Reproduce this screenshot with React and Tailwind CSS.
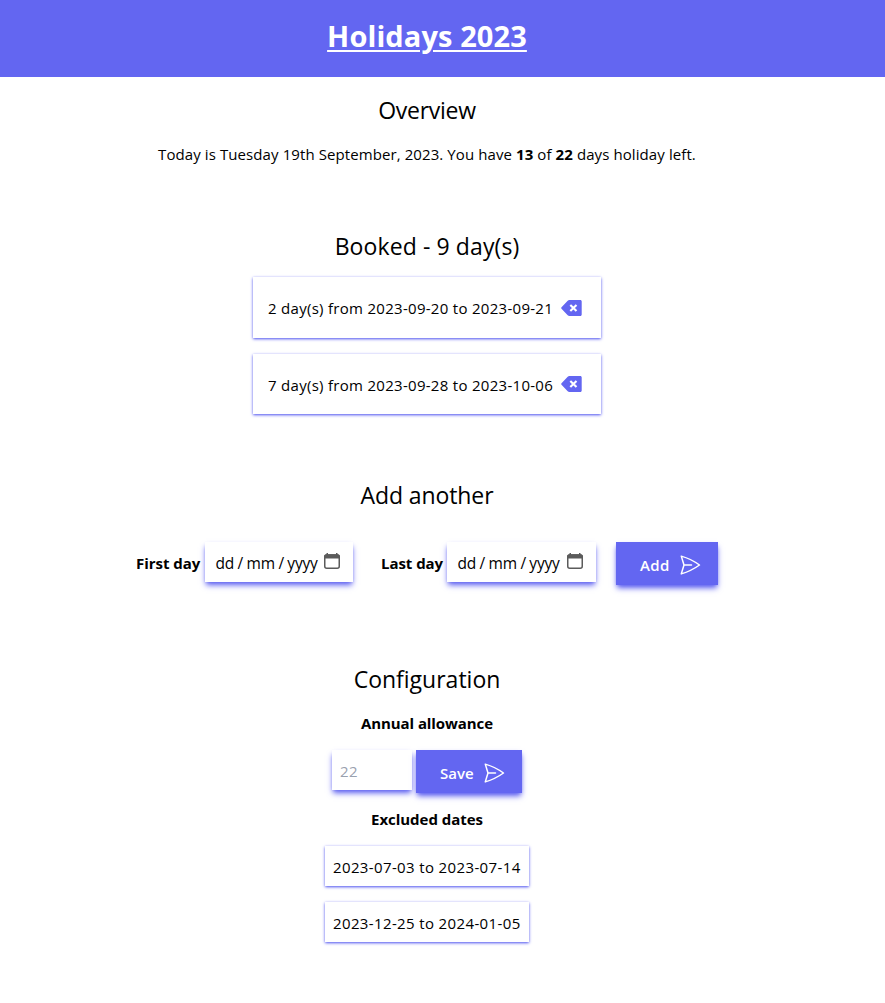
const BOOKED = [
  { text: '2 day(s) from 2023-09-20 to 2023-09-21', size: 'h-[61px] mb-[15.5px]', textClass: 'pt-[1px]' },
  { text: '7 day(s) from 2023-09-28 to 2023-10-06', size: 'h-[60px]', textClass: 'pt-[3px]' },
];
const EXCLUDED = ['2023-07-03 to 2023-07-14', '2023-12-25 to 2024-01-05'];

function BackspaceIcon() {
  return (
    <svg className="ml-[7px] h-4 w-[21px] shrink-0" viewBox="0 0 21 16" fill="none">
      <path d="M6.7.7C7.2.2 7.7 0 8.3 0H19.2C20.2 0 20.7.6 20.7 1.5V14.5C20.7 15.4 20.2 16 19.2 16H8.3C7.7 16 7.2 15.8 6.7 15.3L.5 8.8C0 8.3 0 7.7.5 7.2Z" fill="#6366f1" />
      <path d="M9.3 4.9 15.5 11.1M15.5 4.9 9.3 11.1" stroke="white" strokeWidth="2.1" />
    </svg>
  );
}

function SendIcon() {
  return (
    <svg className="h-6 w-6 shrink-0" viewBox="0 0 24 24" fill="none" stroke="white" strokeWidth="1.5" strokeLinecap="round" strokeLinejoin="round">
      <path d="M6 12 3.269 3.126A59.768 59.768 0 0 1 21.485 12 59.77 59.77 0 0 1 3.27 20.876L5.999 12Zm0 0h7.5" />
    </svg>
  );
}

function CalendarIcon() {
  return (
    <svg className="mb-[2px] h-4 w-4 shrink-0" viewBox="0 0 16 16" fill="none">
      <rect x=".75" y="2" width="14.5" height="13.25" rx="2" stroke="#5b5b5b" strokeWidth="1.5" />
      <path d="M0 5.5V3.5C0 2.2.8 1.2 2.2 1.2H2.5V0H4V1.2H12V0H13.5V1.2H13.8C15.2 1.2 16 2.2 16 3.5V5.5Z" fill="#5b5b5b" />
    </svg>
  );
}

function DateField({ label, labelClass, boxClass }) {
  return (
    <div className="flex items-center">
      <span className={`pt-[3px] font-bold tracking-[-0.05px] whitespace-nowrap ${labelClass}`}>{label}</span>
      <div className={`flex h-10 items-center justify-between bg-white pr-[13px] pl-[10.5px] shadow-md shadow-[#6366f1] ${boxClass}`}>
        <span className="w-[104px] pt-[3px] text-[15.5px] tracking-[-0.2px] whitespace-nowrap">
          dd<span className="mx-[3.5px]">/</span>mm<span className="mx-[3.5px]">/</span>yyyy
        </span>
        <CalendarIcon />
      </div>
    </div>
  );
}

function ActionButton({ label, className }) {
  return (
    <button className={`flex h-[43px] items-center justify-between bg-[#6366f1] pt-[3px] pr-4 pl-6 font-semibold text-white shadow-md shadow-[#6366f1] ${className}`}>
      {label}
      <SendIcon />
    </button>
  );
}

export default function App() {
  return (
    <div className="h-[1003px] overflow-hidden bg-white font-['Open_Sans','Noto_Sans',sans-serif] text-[15px] leading-6 text-black">
      <header className="flex h-[77px] justify-center bg-[#6366f1] pt-[18px]">
        <h1 className="ml-[-31px] text-[29px] leading-9 font-bold tracking-[0.1px] text-white underline decoration-2 underline-offset-[3px]">Holidays 2023</h1>
      </header>
      <main className="flex w-[854px] flex-col items-center">
        <h2 className="mt-[17px] text-[23px] leading-8 tracking-[-0.28px]">Overview</h2>
        <p className="mt-4 tracking-[0.09px] whitespace-nowrap">
          Today is Tuesday 19th September, 2023. You have <b>13</b> of <b>22</b> days holiday left.
        </p>

        <h2 className="mt-16 text-[23px] leading-8 tracking-[0.1px]">Booked - 9 day(s)</h2>
        <ul className="mt-[15px]">
          {BOOKED.map((b) => (
            <li key={b.text} className={`flex w-[348px] items-center bg-white pl-[15px] shadow shadow-[#6366f1] ${b.size}`}>
              <span className={`w-[286px] tracking-[0.29px] whitespace-nowrap ${b.textClass}`}>{b.text}</span>
              <BackspaceIcon />
            </li>
          ))}
        </ul>

        <h2 className="mt-[65px] text-[23px] leading-8 tracking-[-0.1px]">Add another</h2>
        <div className="mt-[31px] flex items-start">
          <DateField label="First day" labelClass="w-[69px]" boxClass="w-[148px]" />
          <div className="w-7" />
          <DateField label="Last day" labelClass="w-[66px]" boxClass="w-[149px]" />
          <div className="w-5" />
          <ActionButton label="Add" className="w-[102px] tracking-[0.4px]" />
        </div>

        <h2 className="mt-[78px] text-[23px] leading-8">Configuration</h2>
        <h3 className="mt-4 font-bold tracking-[-0.08px]">Annual allowance</h3>
        <div className="mt-[15px] flex items-start gap-1">
          <div className="h-10 w-20 bg-white pt-[9px] pl-2 tracking-[0.3px] text-gray-400 shadow-md shadow-[#6366f1]">22</div>
          <ActionButton label="Save" className="w-[106px]" />
        </div>
        <h3 className="mt-[14px] font-bold tracking-[-0.04px]">Excluded dates</h3>
        <ul className="mt-[15px] flex flex-col gap-4">
          {EXCLUDED.map((d) => (
            <li key={d} className="h-10 w-[204px] bg-white pt-[9px] pl-2 tracking-[0.37px] whitespace-nowrap shadow shadow-[#6366f1]">{d}</li>
          ))}
        </ul>
      </main>
    </div>
  );
}
